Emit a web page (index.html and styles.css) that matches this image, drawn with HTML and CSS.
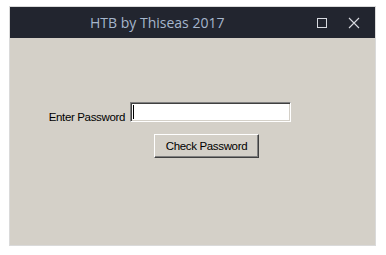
FILE: index.html
```html
<!DOCTYPE html>
<html>
<head>
<meta charset="utf-8">
<link rel="stylesheet" href="styles.css">
</head>
<body>
<div class="window">
  <div class="titlebar">
    <div class="title">HTB by Thiseas 2017</div>
    <div class="controls">
      <svg class="ctl" width="12" height="12" viewBox="0 0 12 12"><rect x="1.5" y="1.5" width="9" height="9" fill="none" stroke="#d8dae0" stroke-width="1"/></svg>
      <svg class="ctl close" width="12" height="12" viewBox="0 0 12 12"><path d="M1 1 L11 11 M11 1 L1 11" stroke="#d8dae0" stroke-width="1.1" fill="none"/></svg>
    </div>
  </div>
  <div class="client">
    <div class="row">
      <label class="label">Enter Password</label>
      <div class="input"><span class="caret"></span></div>
    </div>
    <div class="btnrow">
      <button class="btn">Check Password</button>
    </div>
  </div>
</div>
</body>
</html>
```
FILE: styles.css
```css
html, body {
  margin: 0;
  padding: 0;
  background: #ffffff;
}
body {
  padding: 6px 0 0 9px;
}
.window {
  width: 367px;
  height: 240px;
  box-sizing: border-box;
  border: 1px solid #dadada;
  display: flex;
  flex-direction: column;
}
.titlebar {
  height: 31px;
  background: #22252f;
  display: flex;
  align-items: center;
}
.title {
  font-family: "Open Sans", "Noto Sans", sans-serif;
  font-size: 14px;
  color: #a6b6cc;
  padding-left: 80px;
  line-height: 31px;
  white-space: nowrap;
}
.controls {
  margin-left: auto;
  display: flex;
  align-items: center;
  gap: 20px;
  padding-right: 15px;
}
.ctl { display: block; }
.client {
  flex: 1;
  background: #d4d0c8;
  padding-top: 64px;
}
.row {
  display: flex;
  align-items: flex-end;
}
.label {
  width: 115px;
  text-align: right;
  font-family: "Liberation Sans", Arial, sans-serif;
  font-size: 11.5px;
  letter-spacing: -0.35px;
  color: #000;
  line-height: 12px;
  margin-bottom: -1px;
}
.input {
  margin-left: 5px;
  width: 161px;
  height: 20px;
  box-sizing: border-box;
  background: #fff;
  border-top: 1px solid #808080;
  border-left: 1px solid #808080;
  border-right: 1px solid #ffffff;
  border-bottom: 1px solid #ffffff;
  box-shadow: inset 1px 1px 0 #404040, inset -1px -1px 0 #d4d0c8;
  position: relative;
}
.caret {
  position: absolute;
  left: 2px;
  top: 2px;
  width: 1px;
  height: 14px;
  background: #000;
}
.btnrow {
  padding-left: 144px;
  margin-top: 12px;
}
.btn {
  width: 105px;
  height: 24px;
  margin: 0;
  padding: 0;
  background: #d4d0c8;
  font-family: "Liberation Sans", Arial, sans-serif;
  font-size: 11.5px;
  letter-spacing: -0.35px;
  color: #000;
  border-top: 1px solid #ffffff;
  border-left: 1px solid #ffffff;
  border-right: 1px solid #404040;
  border-bottom: 1px solid #404040;
  box-shadow: inset -1px -1px 0 #808080;
  box-sizing: border-box;
}
```
